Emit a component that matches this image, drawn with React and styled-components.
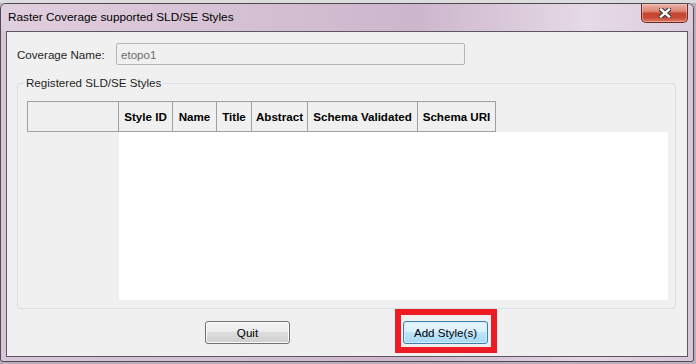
import React from 'react';
import styled, { createGlobalStyle } from 'styled-components';

const GlobalStyle = createGlobalStyle`
  html, body { margin: 0; padding: 0; }
  body {
    background: #c9c0c9;
    font-family: "Liberation Sans", Arial, sans-serif;
    font-size: 11.6px;
    color: #000;
  }
`;

const columns = [
  { label: '', width: 92 },
  { label: 'Style ID', width: 54 },
  { label: 'Name', width: 44 },
  { label: 'Title', width: 35 },
  { label: 'Abstract', width: 56 },
  { label: 'Schema Validated', width: 110 },
  { label: 'Schema URI', width: 78 },
];

const App = () => {
  return (
    <>
      <GlobalStyle />
      <Desktop>
        <Window>
          <TitleBar>
            <Title>Raster Coverage supported SLD/SE Styles</Title>
            <CloseBtn type='button'>
              <svg width="12" height="10" viewBox="0 0 12 10">
                <path d="M2 1.5 L10 8.5 M10 1.5 L2 8.5" stroke="#3b3438" strokeWidth="4.6" strokeLinecap="square" />
                <path d="M2 1.5 L10 8.5 M10 1.5 L2 8.5" stroke="#ffffff" strokeWidth="2.4" strokeLinecap="square" />
              </svg>
            </CloseBtn>
          </TitleBar>
          <Client>
            <FieldRow>
              <FieldLabel>Coverage Name:</FieldLabel>
              <TextBox value="etopo1" readOnly disabled />
            </FieldRow>
            <Group>
              <Legend>Registered SLD/SE Styles</Legend>
              <Table>
                <HeaderRow>
                  {columns.map((col, i) => (
                    <HeadCell key={i} $width={col.width} $first={i === 0}>{col.label}</HeadCell>
                  ))}
                </HeaderRow>
                <BodyRow>
                  <Gutter $width={columns[0].width} />
                  <DataArea />
                </BodyRow>
              </Table>
            </Group>
            <ButtonRow>
              <Button type='button' $top={12}>Quit</Button>
              <Highlight>
                <Button type='button' $primary>Add Style(s)</Button>
              </Highlight>
            </ButtonRow>
          </Client>
        </Window>
      </Desktop>
    </>
  );
}

export default App;


const Desktop = styled.div`
  width: 696px;
  height: 364px;
  overflow: hidden;
  box-sizing: border-box;
  padding-top: 3px;
  background: linear-gradient(180deg, #dcdcdc 0, #dcdcdc 3px, #b9aeb9 3px);
`
const Window = styled.div`
  width: 694px;
  height: 359px;
  box-sizing: border-box;
  border: 1px solid #4e4a50;
  border-radius: 6px 6px 3px 3px;
  background: linear-gradient(90deg, #d9c5d8 0%, #d3bfd3 35%, #cbb5cb 60%, #e4d7e3 85%, #d8c6d8 100%);
  display: flex;
  flex-direction: column;
  overflow: hidden;
`
const TitleBar = styled.div`
  height: 27px;
  display: flex;
  align-items: flex-start;
  justify-content: space-between;
  background: linear-gradient(90deg, #e0cfde 0%, #d6c2d5 30%, #ccb6cc 60%, #e6dae6 85%, #dccbdc 100%);
`
const Title = styled.div`
  padding: 6px 0 0 7px;
  line-height: 15px;
  font-size: 11.8px;
  color: #000;
`
const CloseBtn = styled.button`
  width: 47px;
  height: 19px;
  margin-right: 5px;
  padding: 0;
  border: 1px solid #6a2a22;
  border-top: none;
  border-radius: 0 0 5px 5px;
  background: linear-gradient(180deg, #eab2a6 0%, #dc8676 40%, #c5462f 52%, #c84a36 75%, #dd7a62 100%);
  box-shadow: inset 0 0 0 1px rgba(255, 220, 210, 0.45);
  display: flex;
  align-items: center;
  justify-content: center;
`
const Client = styled.div`
  flex: 1;
  margin: 0 5px 4px;
  border: 1px solid #5d5560;
  background: #f0f0f0;
  display: flex;
  flex-direction: column;
`
const FieldRow = styled.div`
  display: flex;
  align-items: center;
  margin: 11px 0 0 10px;
  height: 22px;
`
const FieldLabel = styled.div`
  width: 99px;
  color: #1e1e1e;
`
const TextBox = styled.input`
  width: 349px;
  height: 22px;
  box-sizing: border-box;
  border: 1px solid #b5b5b5;
  border-radius: 2px;
  background: #f0f0f0;
  padding: 0 4px;
  font: inherit;
  color: #6d6d6d;
  outline: none;
  &:disabled { color: #6d6d6d; }
`
const Group = styled.fieldset`
  margin: 11px 11px 0 10px;
  padding: 11px 7px 8px 9px;
  min-width: 0;
  border: 1px solid #d5dfe5;
  border-radius: 3px;
`
const Legend = styled.legend`
  margin-left: -3px;
  padding: 0 2px;
  line-height: 14px;
  color: #1e1e1e;
`
const Table = styled.div`
  display: flex;
  flex-direction: column;
`
const HeaderRow = styled.div`
  display: flex;
  height: 31px;
`
const HeadCell = styled.div`
  width: ${p => p.$width}px;
  box-sizing: border-box;
  border-top: 1px solid #a0a0a0;
  border-bottom: 1px solid #a0a0a0;
  border-right: 1px solid #a0a0a0;
  border-left: ${p => p.$first ? '1px solid #a0a0a0' : 'none'};
  background: #f0f0f0;
  font-weight: bold;
  display: flex;
  align-items: center;
  justify-content: center;
  white-space: nowrap;
`
const BodyRow = styled.div`
  display: flex;
  height: 168px;
`
const Gutter = styled.div`
  width: ${p => p.$width}px;
`
const DataArea = styled.div`
  flex: 1;
  background: #fff;
`
const ButtonRow = styled.div`
  display: flex;
  align-items: flex-start;
  padding-left: 198px;
  gap: 105px;
`
const Highlight = styled.div`
  width: 102px;
  height: 44px;
  box-sizing: border-box;
  border: 6px solid #ed1c24;
  padding: 6px 3px 3px 2px;
`
const Button = styled.button`
  width: 85px;
  height: 23px;
  margin-top: ${p => p.$top || 0}px;
  padding: 0;
  font: inherit;
  color: #000;
  border: 1px solid ${p => p.$primary ? '#3c7fb1' : '#707070'};
  border-radius: 3px;
  background: ${p => p.$primary
    ? 'linear-gradient(180deg, #eaf6fd 0%, #d9f0fc 50%, #bee6fd 50%, #a7d9f5 100%)'
    : 'linear-gradient(180deg, #f2f2f2 0%, #ebebeb 50%, #dddddd 50%, #cfcfcf 100%)'};
  box-shadow: inset 0 0 0 1px ${p => p.$primary ? '#d6eefc' : '#fbfbfb'};
`
